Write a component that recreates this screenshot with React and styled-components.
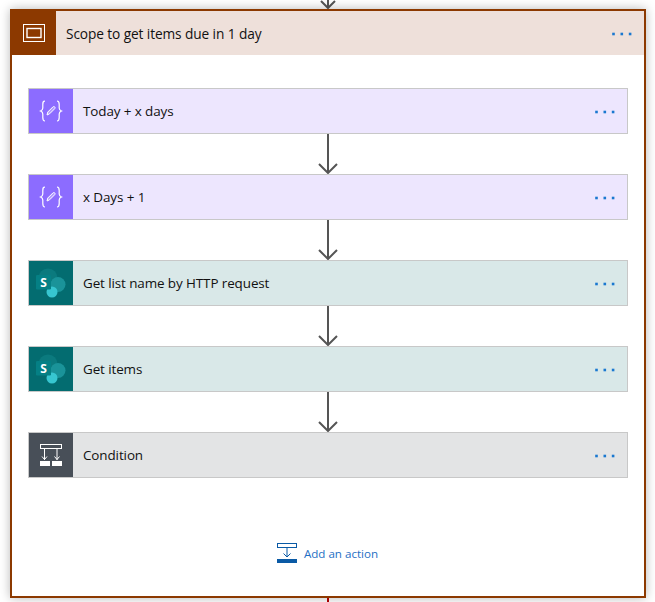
import React from "react";
import styled, { createGlobalStyle } from "styled-components";

const Global = createGlobalStyle`
  html, body { margin: 0; padding: 0; background: #fff; overflow: hidden; }
  body { font-family: "Open Sans", "Noto Sans", "Liberation Sans", sans-serif; }
`;
const Page = styled.div`
  width: 655px; height: 602px; overflow: hidden; display: flex; flex-direction: column; align-items: center; background: #fff;
`;
const TopArrow = styled.svg`
  display: block; width: 20px; height: 9px; flex: none; margin-left: 1px;
`;
const Scope = styled.section`
  box-sizing: border-box; width: 636px; height: 589px; flex: none; margin-left: 1px;
  border: 2px solid #8c3900; background: #fff;
  box-shadow: 0 0 10px rgba(0,0,0,.28);
  display: flex; flex-direction: column;
`;
const ScopeHeader = styled.header`
  display: flex; align-items: center; height: 44px; flex: none; background: #eee0da;
`;
const ScopeIcon = styled.div`
  width: 44px; height: 44px; flex: none; background: #8c3900; display: flex; align-items: center; justify-content: center;
`;
const Title = styled.span`
  flex: 1; font-size: ${p => p.$size}px; color: #111; padding-left: 10px; white-space: nowrap; letter-spacing: -.1px;
`;
const More = styled.svg`
  width: 22px; height: 4px; flex: none; margin: 1px 11px 0 0;
`;
const Body = styled.div`
  flex: 1; display: flex; flex-direction: column; align-items: center; padding: 33px 16px 0 16px;
`;
const Card = styled.article`
  box-sizing: border-box; width: 600px; height: 46px; flex: none; display: flex; align-items: center;
  border: 1px solid #c8c8c8; background: ${p => p.$bg};
`;
const CardIcon = styled.div`
  width: 44px; height: 44px; flex: none; display: flex; align-items: center; justify-content: center; background: ${p => p.$bg};
`;
const Connector = styled.svg`
  display: block; width: 20px; height: 40px; flex: none;
`;
const AddRow = styled.div`
  display: flex; align-items: center; gap: 6px; margin: 65px 2px 0 0; color: #1f6fc4; font-size: 11.6px;
`;
const BottomLine = styled.div`
  position: absolute; left: 327px; top: 598px; width: 2px; height: 4px; background: #a80000;
`;

const Dots = () => (
  <More viewBox="0 0 22 4">
    <rect x="1.200" y="0.700" width="2.600" height="2.600" fill="#1a78d0" />
    <rect x="9.500" y="0.700" width="2.600" height="2.600" fill="#1a78d0" />
    <rect x="17.800" y="0.700" width="2.600" height="2.600" fill="#1a78d0" />
  </More>
);
const Arrow = () => (
  <Connector viewBox="0 0 20 40">
    <path d="M10 0V38" stroke="#555" strokeWidth="2" fill="none" />
    <path d="M1 30l9 9 9-9" stroke="#555" strokeWidth="2" fill="none" />
  </Connector>
);
const VarIcon = () => (
  <svg width="24" height="22" viewBox="0 0 24 22" fill="none" stroke="#fff" strokeWidth="1.200">
    <path d="M6 1C3.800 1 3.800 2.500 3.800 4.500V8c0 1.500-.6 2.400-2.300 3 1.700.6 2.300 1.500 2.300 3v3.500c0 2 0 3.500 2.200 3.500" />
    <path d="M18 1c2.200 0 2.200 1.500 2.200 3.500V8c0 1.500.6 2.400 2.300 3-1.700.6-2.300 1.500-2.300 3v3.500c0 2 0 3.500-2.200 3.500" />
    <path d="M8 15l.8-3 5-5c.6-.6 1.400-.6 1.900-.1s.5 1.300-.1 1.900l-5 5z" fill="#ffffff55" strokeWidth="1" />
  </svg>
);
const SpIcon = () => (
  <svg width="30" height="30" viewBox="0 0 30 30">
    <circle cx="12" cy="10" r="9.500" fill="#0b7a7e" />
    <circle cx="22" cy="16.500" r="7.500" fill="#1a9399" />
    <circle cx="16" cy="24" r="5.500" fill="#37c6d0" />
    <rect x="0" y="7" width="15" height="14.500" rx="1.200" fill="#058085" />
    <text x="7.500" y="18.500" textAnchor="middle" fontFamily="Open Sans, sans-serif" fontSize="12" fontWeight="700" fill="#fff">S</text>
  </svg>
);
const CondIcon = () => (
  <svg width="24" height="24" viewBox="0 0 24 24" fill="none" stroke="#fff" strokeWidth="1">
    <rect x="1.500" y="1.500" width="21" height="4" />
    <path d="M5.500 6v11M18 6v11M3 13.500L5.500 16.500l2.500-3M15.500 13.500L18 16.500l2.500-3" />
    <rect x="1" y="18" width="10" height="5" fill="#fff" stroke="none" />
    <rect x="13" y="18" width="10" height="5" fill="#fff" stroke="none" />
  </svg>
);
const cards = [
  { t: "Today + x days", bg: "#ede6fe", ic: "#8c6cff", icon: <VarIcon /> },
  { t: "x Days + 1", bg: "#ede6fe", ic: "#8c6cff", icon: <VarIcon /> },
  { t: "Get list name by HTTP request", bg: "#d9e8e8", ic: "#036c70", icon: <SpIcon /> },
  { t: "Get items", bg: "#d9e8e8", ic: "#036c70", icon: <SpIcon /> },
  { t: "Condition", bg: "#e3e4e5", ic: "#484f58", icon: <CondIcon /> },
];

export default function App() {
  return (
    <Page>
      <Global />
      <TopArrow viewBox="0 0 20 9">
        <path d="M10 0V7.500M3 1l7 7 7-7" stroke="#555" strokeWidth="2" fill="none" />
      </TopArrow>
      <Scope>
        <ScopeHeader>
          <ScopeIcon>
            <svg width="22" height="18" viewBox="0 0 22 18" fill="none" stroke="#fff">
              <rect x="0.500" y="0.500" width="21" height="17" />
              <rect x="4" y="4.500" width="14" height="9" strokeWidth="1.400" />
            </svg>
          </ScopeIcon>
          <Title $size={13.7}>Scope to get items due in 1 day</Title>
          <Dots />
        </ScopeHeader>
        <Body>
          {cards.map((c, i) => (
            <React.Fragment key={c.t + i}>
              {i > 0 && <Arrow />}
              <Card $bg={c.bg}>
                <CardIcon $bg={c.ic}>{c.icon}</CardIcon>
                <Title $size={13.45}>{c.t}</Title>
                <Dots />
              </Card>
            </React.Fragment>
          ))}
          <AddRow>
            <svg width="22" height="20" viewBox="0 0 22 20" fill="none" stroke="#0a5aa5">
              <rect x="1.500" y="0.500" width="19" height="4" />
              <path d="M11 5v9M7.500 10.500L11 14l3.500-3.500" />
              <rect x="1" y="16" width="20" height="4" fill="#0a5aa5" stroke="none" />
            </svg>
            <span>Add an action</span>
          </AddRow>
        </Body>
      </Scope>
      <BottomLine />
    </Page>
  );
}
